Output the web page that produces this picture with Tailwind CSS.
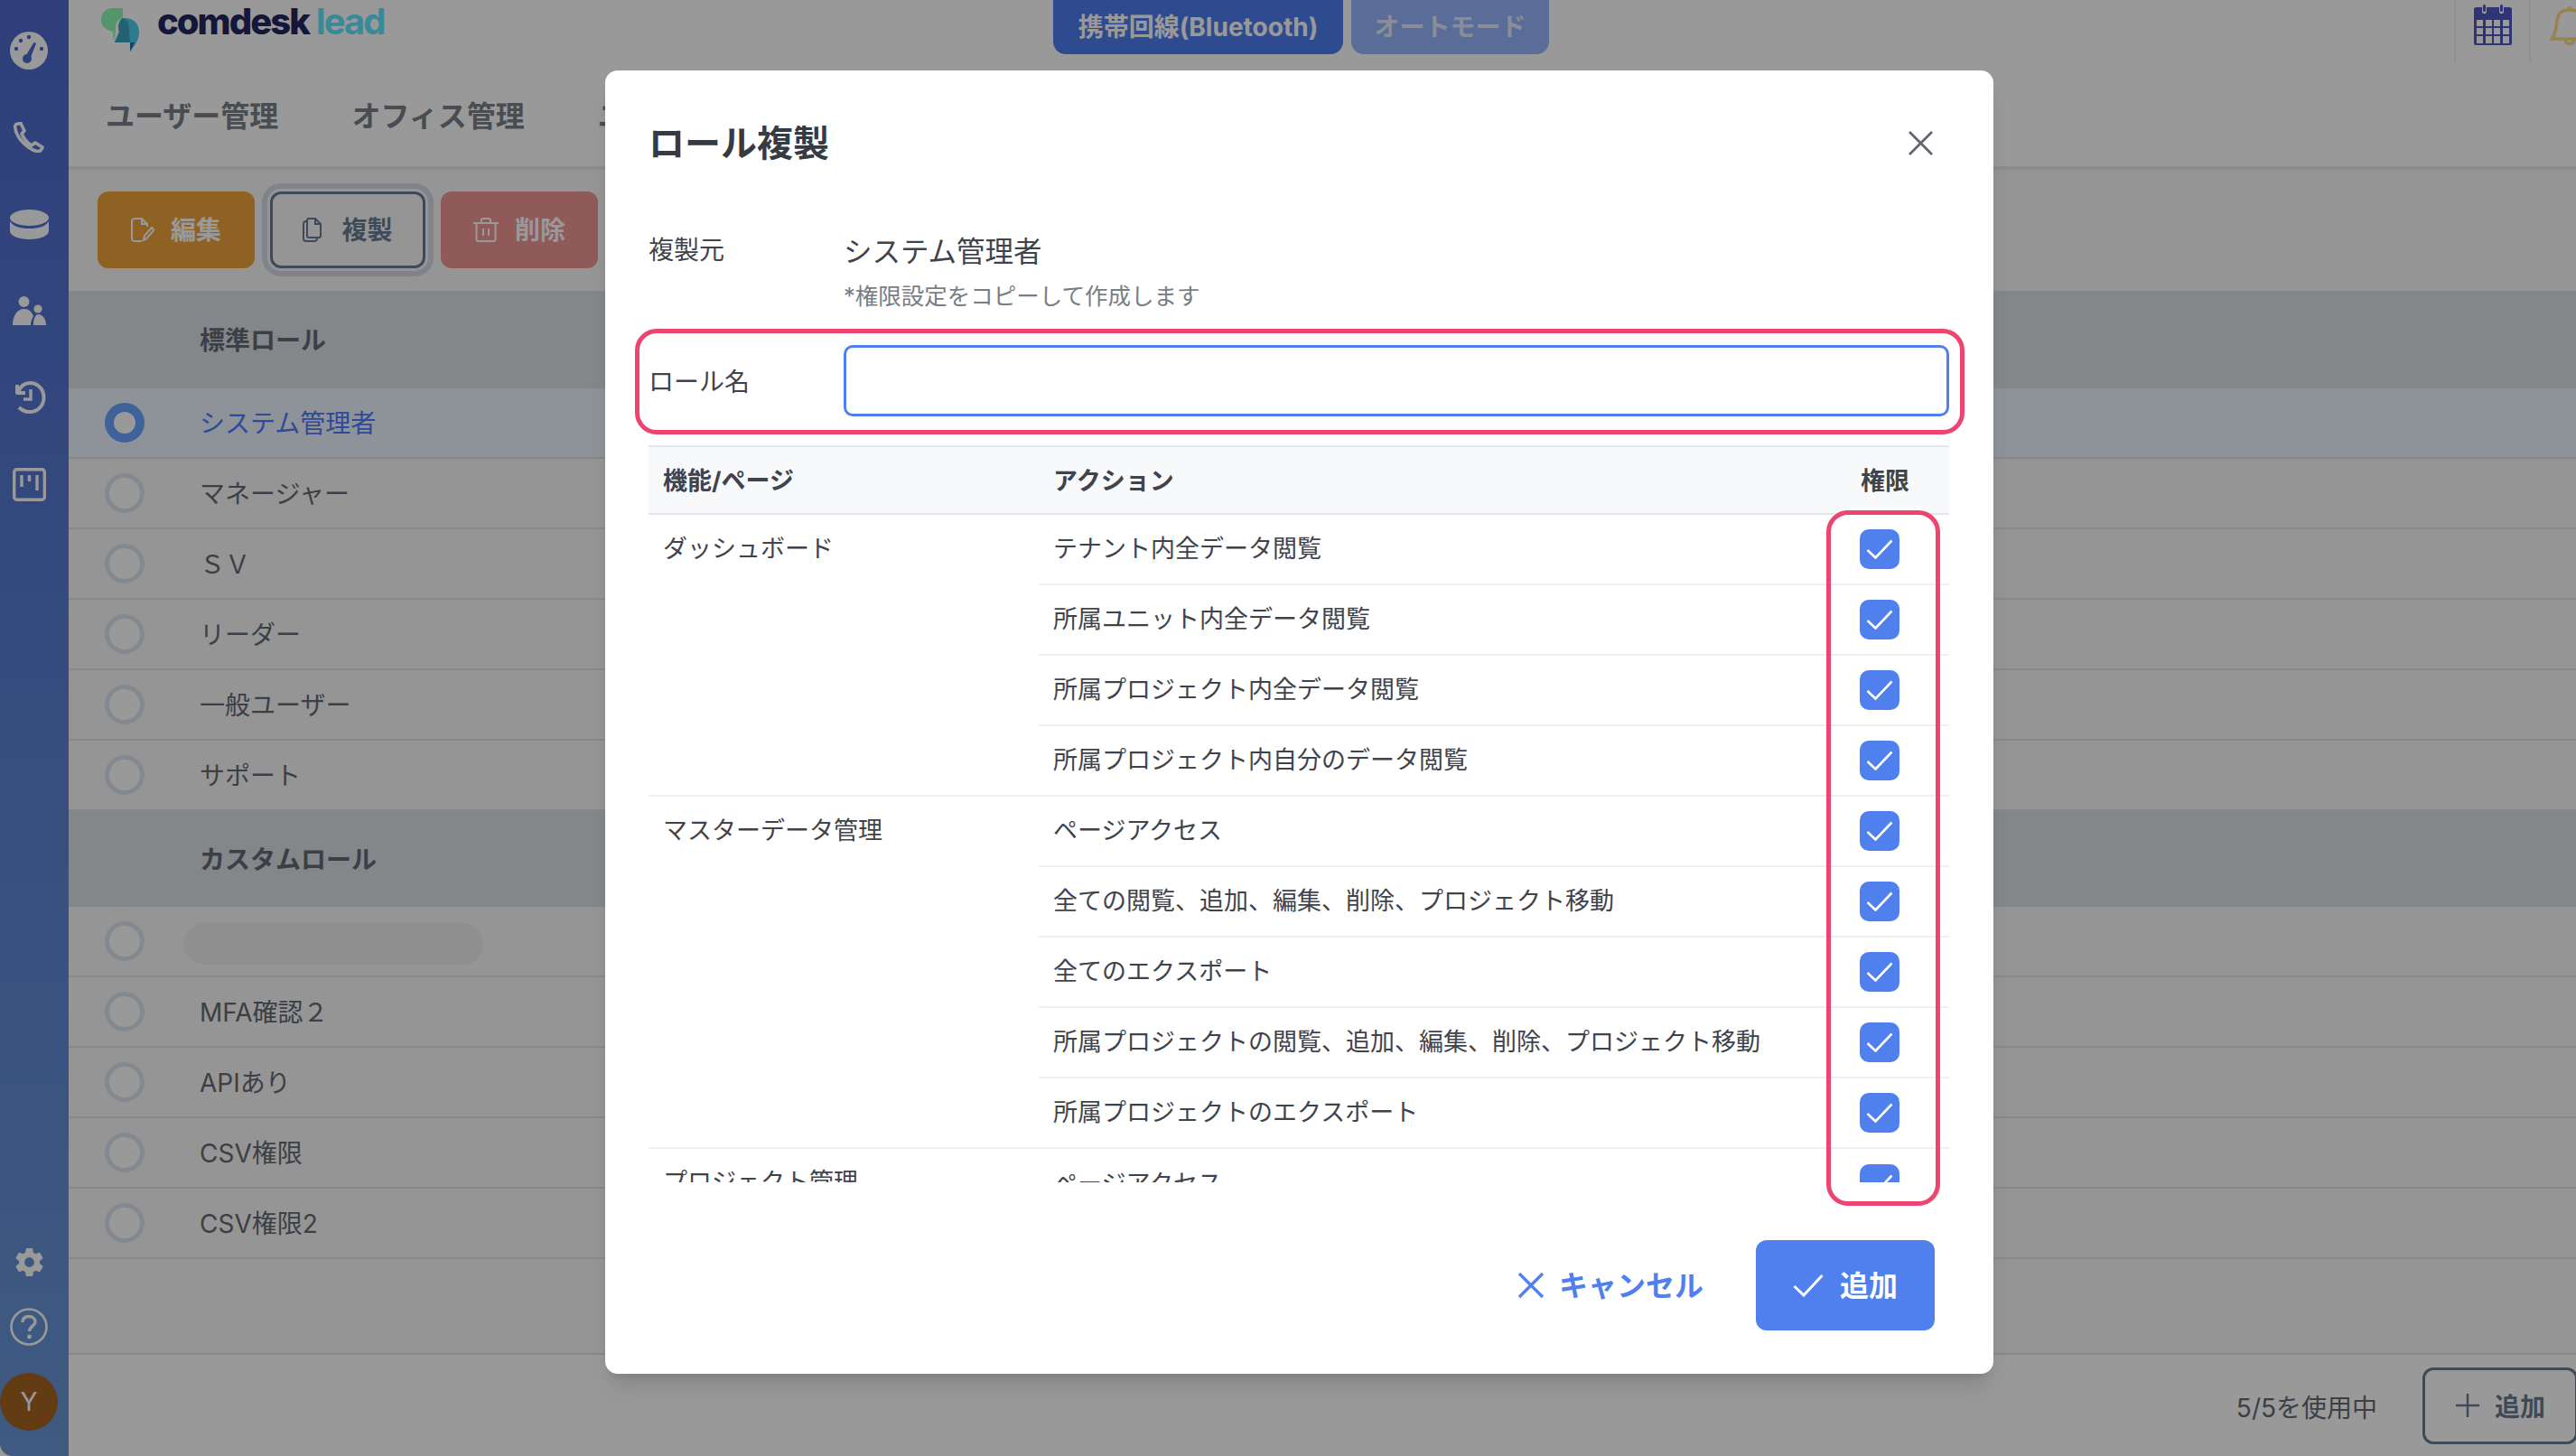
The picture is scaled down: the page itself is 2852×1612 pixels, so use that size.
<!DOCTYPE html>
<html lang="ja">
<head>
<meta charset="utf-8">
<script src="https://cdn.jsdelivr.net/npm/@tailwindcss/browser@4"></script>
</head>
<body class="relative flex w-[2852px] h-[1612px] overflow-hidden bg-white font-['Inter','Noto_Sans_CJK_JP',sans-serif] text-[#646a73]">

<!-- sidebar -->
<aside class="flex flex-col justify-between w-[76px] h-full rounded-bl-[14px] bg-gradient-to-b from-[#4d69cd] to-[#6b98d9] text-white shrink-0">
  <nav class="flex flex-col w-[64px] pt-[8px]">
    <a class="flex items-center justify-center h-[96px]">
      <svg class="w-[42px] h-[42px]" viewBox="0 0 42 42"><circle cx="21" cy="21" r="21" fill="#fff"/><g fill="#4d69cd"><circle cx="12" cy="10" r="2.2"/><circle cx="21" cy="6" r="2.2"/><circle cx="7" cy="19" r="2.2"/><circle cx="35" cy="19" r="2.2"/><circle cx="19" cy="30" r="5"/><path d="M16.5 28.5 L26.5 12 L29 13 L22 31Z"/></g></svg>
    </a>
    <a class="flex items-center justify-center h-[96px]">
      <svg class="w-[34px] h-[34px]" viewBox="0 0 34 34" fill="none" stroke="#fff" stroke-width="3.6" stroke-linejoin="round"><path d="M3 2.5 L8 1.5 L12 10 L9 13 C11 18 15 23 20 26 L24 23 L32 28 C31 31 29 33 26 32.5 C15 30 3 17 1.8 6.5 C1.6 4.5 2 3 3 2.5Z"/></svg>
    </a>
    <a class="flex items-center justify-center h-[96px]">
      <svg class="w-[43px] h-[33px]" viewBox="0 0 43 33"><ellipse cx="21.5" cy="9" rx="21.5" ry="9" fill="#fff"/><path d="M0 13 C4 19 11 21 21.5 21 C32 21 39 19 43 13 V24 C43 29 33 33 21.5 33 C10 33 0 29 0 24Z" fill="#fff"/></svg>
    </a>
    <a class="flex items-center justify-center h-[96px]">
      <svg class="w-[37px] h-[32px]" viewBox="0 0 37 32" fill="#fff"><circle cx="12.5" cy="6" r="6"/><circle cx="28" cy="14" r="4.6"/><path d="M0 32 C0 22 5 14 12.5 14 C18 14 21 17 23 22 C21 25 20 28 20 32Z"/><path d="M23 32 C23 25 25 20 28.5 20 C33 20 37 25 37 32Z"/></svg>
    </a>
    <a class="flex items-center justify-center h-[96px]">
      <svg class="w-[37px] h-[38px]" viewBox="0 0 37 38" fill="none" stroke="#fff" stroke-width="4"><path d="M5 5 V14 H14" stroke-linejoin="round"/><path d="M6 13 C9 6 14 3 19 3 C28 3 34.5 10 34.5 19 C34.5 28 28 35 19 35 C14 35 10 33 7 30"/><path d="M20 10 V21 H12" stroke-width="3.4"/></svg>
    </a>
    <a class="flex items-center justify-center h-[96px]">
      <svg class="w-[37px] h-[37px]" viewBox="0 0 37 37" fill="none" stroke="#fff" stroke-width="3.4"><rect x="1.7" y="1.7" width="33.6" height="33.6" rx="3"/><path d="M10 8 V21 M18.5 8 V15 M27 8 V25"/></svg>
    </a>
  </nav>
  <div class="flex flex-col items-center w-[64px] pb-[28px]">
    <svg class="w-[37px] h-[37px] mb-[32px]" viewBox="0 0 24 24" fill="#fff"><path d="M19.4 13c.04-.33.1-.66.1-1s-.06-.67-.1-1l2.1-1.65c.2-.15.25-.42.12-.64l-2-3.46c-.12-.22-.38-.3-.6-.22l-2.5 1c-.52-.4-1.07-.73-1.7-.98l-.38-2.65A.49.49 0 0 0 14 2h-4c-.25 0-.46.18-.5.42l-.37 2.65c-.62.25-1.17.59-1.7.98l-2.49-1c-.23-.08-.48 0-.6.22l-2 3.46c-.13.22-.08.49.12.64L4.57 11c-.04.33-.07.66-.07 1s.03.67.07 1l-2.11 1.65c-.2.15-.25.42-.12.64l2 3.46c.12.22.37.3.6.22l2.5-1c.52.4 1.07.73 1.69.98l.37 2.65c.04.24.25.42.5.42h4c.25 0 .46-.18.5-.42l.37-2.65c.62-.25 1.17-.59 1.7-.98l2.5 1c.22.08.47 0 .6-.22l2-3.46c.12-.22.07-.49-.12-.64L19.4 13zM12 15.5a3.5 3.5 0 1 1 0-7 3.5 3.5 0 0 1 0 7z"/></svg>
    <svg class="w-[42px] h-[42px] mb-[30px]" viewBox="0 0 42 42" fill="none" stroke="#fff"><circle cx="21" cy="21" r="19.5" stroke-width="2.6"/><path d="M14 16 C14 11.5 17 9.5 21 9.5 C25 9.5 28 12 28 15.5 C28 20 21.5 20.5 21.5 26" stroke-width="3.4"/><circle cx="21.5" cy="32" r="2.4" fill="#fff" stroke="none"/></svg>
    <div class="flex items-center justify-center w-[64px] h-[64px] rounded-full bg-[#a56421] text-[28px] text-white">Y</div>
  </div>
</aside>

<!-- page -->
<main class="flex flex-col flex-1 min-w-0">
  <header class="flex h-[70px] shrink-0">
    <div class="flex ml-[36px] w-[1054px]">
      <svg class="w-[42px] h-[48px] mt-[9px]" viewBox="0 0 42 48"><path d="M12 0 H24 V11 C19 12 16 16 16 21 L15 36 C12 32 14 28 13 26 C5 24 0 20 0 13 C0 5 6 0 12 0Z" fill="#8ef8b4"/><path d="M24 11 C34 10 42 16 42 26 C42 36 37 42 32 48 L32 38 L15 38 L20 26 C18 22 19 14 24 11Z" fill="#4ecbf0"/><path d="M24 11 C30 12 31 18 31 26 L32 38 L15 38 L20 26 C18 22 19 14 24 11Z" fill="#3ca2c0"/><path d="M32 38 H37 L32 48Z" fill="#2a6da6"/></svg>
      <div class="ml-[20px] -mt-[8px] text-[40px] leading-[64px] font-extrabold tracking-[-2px] whitespace-nowrap"><span class="text-[#222761]">comdesk</span><span class="ml-[8px] font-bold tracking-[-2px] text-[#60e6ff]">lead</span></div>
    </div>
    <div class="flex gap-[9px] h-[60px]">
      <button class="w-[321px] rounded-b-[14px] bg-[#4f7ef0] text-[28px] font-bold text-white">携帯回線(Bluetooth)</button>
      <button class="w-[219px] rounded-b-[14px] bg-[#96b6fd] text-[28px] font-bold text-white/75">オートモード</button>
    </div>
    <div class="flex ml-auto">
      <div class="flex justify-center w-[85px] h-[70px] pt-[5px] border-x-2 border-black/5">
        <svg class="w-[42px] h-[45px]" viewBox="0 0 42 45"><path d="M0 5 C0 4 1 3 3 3 H9 V8 C9 11 14 11 14 8 V3 H28 V8 C28 11 33 11 33 8 V3 H39 C41 3 42 4 42 5 V43 C42 44 41 45 40 45 H2 C1 45 0 44 0 43Z" fill="#4d58c1"/><rect x="10" y="0" width="3" height="8" rx="1.5" fill="#4d58c1"/><rect x="29" y="0" width="3" height="8" rx="1.5" fill="#4d58c1"/><g fill="#fff"><rect x="3" y="17" width="7" height="7"/><rect x="13" y="17" width="7" height="7"/><rect x="22" y="17" width="7" height="7"/><rect x="32" y="17" width="7" height="7"/><rect x="3" y="26" width="7" height="7"/><rect x="13" y="26" width="7" height="7"/><rect x="22" y="26" width="7" height="7"/><rect x="32" y="26" width="7" height="7"/><rect x="3" y="35" width="7" height="8"/><rect x="13" y="35" width="7" height="8"/><rect x="22" y="35" width="7" height="8"/><rect x="32" y="35" width="7" height="8"/></g></svg>
      </div>
      <div class="w-[50px] h-[70px] pt-[6px] pl-[21px] overflow-hidden">
        <svg class="w-[44px] h-[44px] max-w-none" viewBox="0 0 44 44" fill="none" stroke="#ffd785" stroke-width="3.5"><path d="M2 37 C7 31 7 24 8 16 C9 9 14 5 22 5 C30 5 35 9 36 16 C37 24 37 31 42 37Z"/><path d="M17 38 C18 44 26 44 27 38"/><path d="M22 5 V1"/></svg>
      </div>
    </div>
  </header>

  <nav class="flex items-center gap-[81px] h-[118px] shrink-0 pl-[41px] pt-[4px] border-b-4 border-[#e9e9e9] text-[32px] font-semibold leading-none text-[#7b8089] whitespace-nowrap">
    <span>ユーザー管理</span><span>オフィス管理</span><span>ユ</span>
  </nav>

  <div class="flex flex-col flex-1 min-h-0 bg-[#f9f9f9]">
    <div class="flex gap-[17px] h-[134px] shrink-0 pl-[32px] pt-[24px] text-[28px] font-semibold">
      <button class="flex items-center justify-center gap-[18px] w-[174px] h-[85px] rounded-[12px] bg-[#eea33c] text-white">
        <svg class="w-[26px] h-[27px]" viewBox="0 0 26 27" fill="none" stroke="#fff" stroke-width="2"><path d="M12 26 H5 C3 26 1 25 1 23 V4 C1 2 3 1 5 1 H12 L18 7 V10 M12 1 V7 H18"/><path d="M14 25 L15 20 L23 11 L25.5 13.5 L17.5 23Z"/></svg>
        <span class="mt-[1px]">編集</span>
      </button>
      <button class="flex items-center justify-center gap-[22px] w-[172px] h-[85px] rounded-[12px] border-[3px] border-[#697c95] outline-[6px] outline-offset-[3px] outline-[#d5dde6] text-[#697c95]">
        <svg class="w-[21px] h-[27px]" viewBox="0 0 21 27" fill="none" stroke="#697c95" stroke-width="2"><path d="M5 4 H3.5 C2 4 1 5 1 7 V23 C1 25 2 26 4 26 H13 C15 26 16 25 16 23"/><path d="M5 3 C5 2 6 1 7 1 H14 L20 7 V20 C20 21 19 22 18 22 H7 C6 22 5 21 5 20Z"/><path d="M14 1 V7 H20"/></svg>
        <span class="mt-[1px]">複製</span>
      </button>
      <button class="flex items-center justify-center gap-[18px] w-[174px] h-[85px] rounded-[12px] bg-[#ee9693] text-white">
        <svg class="w-[28px] h-[27px]" viewBox="0 0 28 27" fill="none" stroke="#fff" stroke-width="2"><path d="M0 6 H28 M9 6 V3 C9 2 10 1 11 1 H17 C18 1 19 2 19 3 V6"/><path d="M3.5 6 V24 C3.5 25 4.5 26 5.5 26 H22.5 C23.5 26 24.5 25 24.5 24 V6 M11 12 V20 M17 12 V20"/></svg>
        <span class="mt-[1px]">削除</span>
      </button>
    </div>

    <section class="flex-1 text-[28px]">
      <h3 class="flex items-center h-[108px] pl-[145px] pt-[1px] bg-[#dae1e6] font-bold">標準ロール</h3>
      <div class="flex items-center h-[78px] pl-[40px] border-b-2 border-[#dee3e9] bg-[#edf3ff] text-[#4f7cff]"><i class="w-[44px] h-[44px] mr-[61px] rounded-full border-[10px] border-[#68a4ff] bg-white"></i><span class="mt-[1px]">システム管理者</span></div>
      <div class="flex items-center h-[78px] pl-[40px] border-b-2 border-[#dee3e9]"><i class="w-[44px] h-[44px] mr-[61px] rounded-full border-[5px] border-[#dde4ee] bg-white"></i><span class="mt-[1px]">マネージャー</span></div>
      <div class="flex items-center h-[78px] pl-[40px] border-b-2 border-[#dee3e9]"><i class="w-[44px] h-[44px] mr-[61px] rounded-full border-[5px] border-[#dde4ee] bg-white"></i><span class="mt-[1px]">ＳＶ</span></div>
      <div class="flex items-center h-[78px] pl-[40px] border-b-2 border-[#dee3e9]"><i class="w-[44px] h-[44px] mr-[61px] rounded-full border-[5px] border-[#dde4ee] bg-white"></i><span class="mt-[1px]">リーダー</span></div>
      <div class="flex items-center h-[78px] pl-[40px] border-b-2 border-[#dee3e9]"><i class="w-[44px] h-[44px] mr-[61px] rounded-full border-[5px] border-[#dde4ee] bg-white"></i><span class="mt-[1px]">一般ユーザー</span></div>
      <div class="flex items-center h-[78px] pl-[40px] border-b-2 border-[#dee3e9]"><i class="w-[44px] h-[44px] mr-[61px] rounded-full border-[5px] border-[#dde4ee] bg-white"></i><span class="mt-[1px]">サポート</span></div>
      <h3 class="flex items-center h-[106px] pl-[145px] pt-[1px] bg-[#dae1e6] font-bold">カスタムロール</h3>
      <div class="flex items-center h-[78px] pl-[40px] border-b-2 border-[#dee3e9]"><i class="w-[44px] h-[44px] mr-[43px] rounded-full border-[5px] border-[#dde4ee] bg-white"></i><i class="w-[332px] h-[46px] mt-[6px] rounded-full bg-[#eeeeee]"></i></div>
      <div class="flex items-center h-[78px] pl-[40px] border-b-2 border-[#dee3e9]"><i class="w-[44px] h-[44px] mr-[61px] rounded-full border-[5px] border-[#dde4ee] bg-white"></i><span class="mt-[1px]">MFA確認２</span></div>
      <div class="flex items-center h-[78px] pl-[40px] border-b-2 border-[#dee3e9]"><i class="w-[44px] h-[44px] mr-[61px] rounded-full border-[5px] border-[#dde4ee] bg-white"></i><span class="mt-[1px]">APIあり</span></div>
      <div class="flex items-center h-[78px] pl-[40px] border-b-2 border-[#dee3e9]"><i class="w-[44px] h-[44px] mr-[61px] rounded-full border-[5px] border-[#dde4ee] bg-white"></i><span class="mt-[1px]">CSV権限</span></div>
      <div class="flex items-center h-[78px] pl-[40px] border-b-2 border-[#dee3e9]"><i class="w-[44px] h-[44px] mr-[61px] rounded-full border-[5px] border-[#dde4ee] bg-white"></i><span class="mt-[1px]">CSV権限2</span></div>
    </section>

    <footer class="flex items-center justify-end gap-[50px] h-[114px] shrink-0 -mr-[2px] border-t-2 border-[#dee3e9] text-[28px] bg-white">
      <span class="mt-[5px]">5/5を使用中</span>
      <button class="flex items-center justify-center gap-[16px] w-[172px] h-[85px] rounded-[12px] border-[3px] border-[#697c95] font-semibold text-[#697c95]">
        <svg class="w-[28px] h-[28px]" viewBox="0 0 28 28" stroke="#697c95" stroke-width="2.4"><path d="M14 1 V27 M1 14 H27"/></svg>
        <span class="mt-[3px]">追加</span>
      </button>
    </footer>
  </div>
</main>

<!-- backdrop -->
<div class="absolute inset-0 bg-black/40"></div>

<!-- dialog -->
<div class="absolute left-[670px] top-[78px] w-[1537px] h-[1443px] rounded-[14px] bg-white shadow-xl text-[#3f434c]">
  <div class="flex items-center justify-between h-[160px] pl-[48px] pr-[67px]">
    <h2 class="pt-[2px] text-[40px] font-bold text-[#363a42]">ロール複製</h2>
    <svg class="w-[27px] h-[27px]" viewBox="0 0 27 27" stroke="#5f6670" stroke-width="2.8" fill="none"><path d="M1 1 L26 26 M26 1 L1 26"/></svg>
  </div>
  <div class="grid grid-cols-[216px_1fr] mt-[20px] pl-[48px] pr-[49px]">
    <div class="text-[28px] leading-[38px]">複製元</div>
    <div class="text-[31.5px] leading-[42px]">システム管理者</div>
    <div></div>
    <div class="mt-[10px] text-[25.5px] leading-[36px] text-[#787d86]">*権限設定をコピーして作成します</div>
    <label class="flex items-center mt-[36px] pt-[3px] text-[28px]">ロール名</label>
    <input type="text" class="mt-[36px] h-[79px] rounded-[10px] border-[3px] border-[#4f80ee] bg-white">
  </div>
  <div class="h-[816px] mt-[32px] ml-[48px] mr-[49px] overflow-hidden">
    <table class="w-full table-fixed border-separate border-spacing-0 text-[27px] text-left">
      <thead>
        <tr class="h-[77px] bg-[#f7f9fb] font-bold">
          <th class="w-[432px] pl-[16px] pt-[3px] border-y-2 border-[#e2e6ec]">機能/ページ</th>
          <th class="pl-[16px] pt-[3px] border-y-2 border-[#e2e6ec]">アクション</th>
          <th class="w-[154px] pr-[44px] pt-[3px] text-right border-y-2 border-[#e2e6ec]">権限</th>
        </tr>
      </thead>
      <tbody>
        <tr class="h-[78px]">
          <td rowspan="4" class="align-top pl-[16px] pt-[18px] border-b-2 border-[#eef0f5]">ダッシュボード</td>
          <td class="pl-[16px] border-b-2 border-[#eef0f5]">テナント内全データ閲覧</td>
          <td class="border-b-2 border-[#eef0f5]"><span class="flex items-center justify-center w-[44px] h-[44px] mx-auto rounded-[10px] bg-[#4f80ee]"><svg class="w-[30px] h-[22px]" viewBox="0 0 30 22" fill="none" stroke="#fff" stroke-width="2.6"><path d="M1.5 12 L10.5 20.5 L28.5 1.5"/></svg></span></td>
        </tr>
        <tr class="h-[78px]">
          <td class="pl-[16px] border-b-2 border-[#eef0f5]">所属ユニット内全データ閲覧</td>
          <td class="border-b-2 border-[#eef0f5]"><span class="flex items-center justify-center w-[44px] h-[44px] mx-auto rounded-[10px] bg-[#4f80ee]"><svg class="w-[30px] h-[22px]" viewBox="0 0 30 22" fill="none" stroke="#fff" stroke-width="2.6"><path d="M1.5 12 L10.5 20.5 L28.5 1.5"/></svg></span></td>
        </tr>
        <tr class="h-[78px]">
          <td class="pl-[16px] border-b-2 border-[#eef0f5]">所属プロジェクト内全データ閲覧</td>
          <td class="border-b-2 border-[#eef0f5]"><span class="flex items-center justify-center w-[44px] h-[44px] mx-auto rounded-[10px] bg-[#4f80ee]"><svg class="w-[30px] h-[22px]" viewBox="0 0 30 22" fill="none" stroke="#fff" stroke-width="2.6"><path d="M1.5 12 L10.5 20.5 L28.5 1.5"/></svg></span></td>
        </tr>
        <tr class="h-[78px]">
          <td class="pl-[16px] border-b-2 border-[#eef0f5]">所属プロジェクト内自分のデータ閲覧</td>
          <td class="border-b-2 border-[#eef0f5]"><span class="flex items-center justify-center w-[44px] h-[44px] mx-auto rounded-[10px] bg-[#4f80ee]"><svg class="w-[30px] h-[22px]" viewBox="0 0 30 22" fill="none" stroke="#fff" stroke-width="2.6"><path d="M1.5 12 L10.5 20.5 L28.5 1.5"/></svg></span></td>
        </tr>
        <tr class="h-[78px]">
          <td rowspan="5" class="align-top pl-[16px] pt-[18px] border-b-2 border-[#eef0f5]">マスターデータ管理</td>
          <td class="pl-[16px] border-b-2 border-[#eef0f5]">ページアクセス</td>
          <td class="border-b-2 border-[#eef0f5]"><span class="flex items-center justify-center w-[44px] h-[44px] mx-auto rounded-[10px] bg-[#4f80ee]"><svg class="w-[30px] h-[22px]" viewBox="0 0 30 22" fill="none" stroke="#fff" stroke-width="2.6"><path d="M1.5 12 L10.5 20.5 L28.5 1.5"/></svg></span></td>
        </tr>
        <tr class="h-[78px]">
          <td class="pl-[16px] border-b-2 border-[#eef0f5]">全ての閲覧、追加、編集、削除、プロジェクト移動</td>
          <td class="border-b-2 border-[#eef0f5]"><span class="flex items-center justify-center w-[44px] h-[44px] mx-auto rounded-[10px] bg-[#4f80ee]"><svg class="w-[30px] h-[22px]" viewBox="0 0 30 22" fill="none" stroke="#fff" stroke-width="2.6"><path d="M1.5 12 L10.5 20.5 L28.5 1.5"/></svg></span></td>
        </tr>
        <tr class="h-[78px]">
          <td class="pl-[16px] border-b-2 border-[#eef0f5]">全てのエクスポート</td>
          <td class="border-b-2 border-[#eef0f5]"><span class="flex items-center justify-center w-[44px] h-[44px] mx-auto rounded-[10px] bg-[#4f80ee]"><svg class="w-[30px] h-[22px]" viewBox="0 0 30 22" fill="none" stroke="#fff" stroke-width="2.6"><path d="M1.5 12 L10.5 20.5 L28.5 1.5"/></svg></span></td>
        </tr>
        <tr class="h-[78px]">
          <td class="pl-[16px] border-b-2 border-[#eef0f5]">所属プロジェクトの閲覧、追加、編集、削除、プロジェクト移動</td>
          <td class="border-b-2 border-[#eef0f5]"><span class="flex items-center justify-center w-[44px] h-[44px] mx-auto rounded-[10px] bg-[#4f80ee]"><svg class="w-[30px] h-[22px]" viewBox="0 0 30 22" fill="none" stroke="#fff" stroke-width="2.6"><path d="M1.5 12 L10.5 20.5 L28.5 1.5"/></svg></span></td>
        </tr>
        <tr class="h-[78px]">
          <td class="pl-[16px] border-b-2 border-[#eef0f5]">所属プロジェクトのエクスポート</td>
          <td class="border-b-2 border-[#eef0f5]"><span class="flex items-center justify-center w-[44px] h-[44px] mx-auto rounded-[10px] bg-[#4f80ee]"><svg class="w-[30px] h-[22px]" viewBox="0 0 30 22" fill="none" stroke="#fff" stroke-width="2.6"><path d="M1.5 12 L10.5 20.5 L28.5 1.5"/></svg></span></td>
        </tr>
        <tr class="h-[78px]">
          <td class="align-top pl-[16px] pt-[17px]">プロジェクト管理</td>
          <td class="pl-[16px]">ページアクセス</td>
          <td><span class="flex items-center justify-center w-[44px] h-[44px] mx-auto rounded-[10px] bg-[#4f80ee]"><svg class="w-[30px] h-[22px]" viewBox="0 0 30 22" fill="none" stroke="#fff" stroke-width="2.6"><path d="M1.5 12 L10.5 20.5 L28.5 1.5"/></svg></span></td>
        </tr>
      </tbody>
    </table>
  </div>
  <div class="flex items-center justify-end gap-[58px] mt-[64px] pr-[65px] text-[32px] font-bold">
    <button class="flex items-center gap-[16px] text-[#4f80ee]">
      <svg class="w-[30px] h-[30px]" viewBox="0 0 30 30" stroke="#4f80ee" stroke-width="3.2"><path d="M2 2 L28 28 M28 2 L2 28"/></svg>
      <span class="mt-[1px]">キャンセル</span>
    </button>
    <button class="flex items-center justify-center gap-[18px] w-[198px] h-[100px] rounded-[12px] bg-[#4f80ee] text-white">
      <svg class="w-[34px] h-[26px]" viewBox="0 0 34 26" fill="none" stroke="#fff" stroke-width="3"><path d="M1.5 14 L12 24 L32.5 2"/></svg>
      <span class="mt-[1px]">追加</span>
    </button>
  </div>
  <!-- annotation outlines -->
  <div class="absolute left-[33px] top-[286px] w-[1472px] h-[117px] rounded-[24px] border-[5px] border-[#ed4470]"></div>
  <div class="absolute left-[1352px] top-[487px] w-[126px] h-[770px] rounded-[24px] border-[5px] border-[#ed4470]"></div>
</div>
</body>
</html>
